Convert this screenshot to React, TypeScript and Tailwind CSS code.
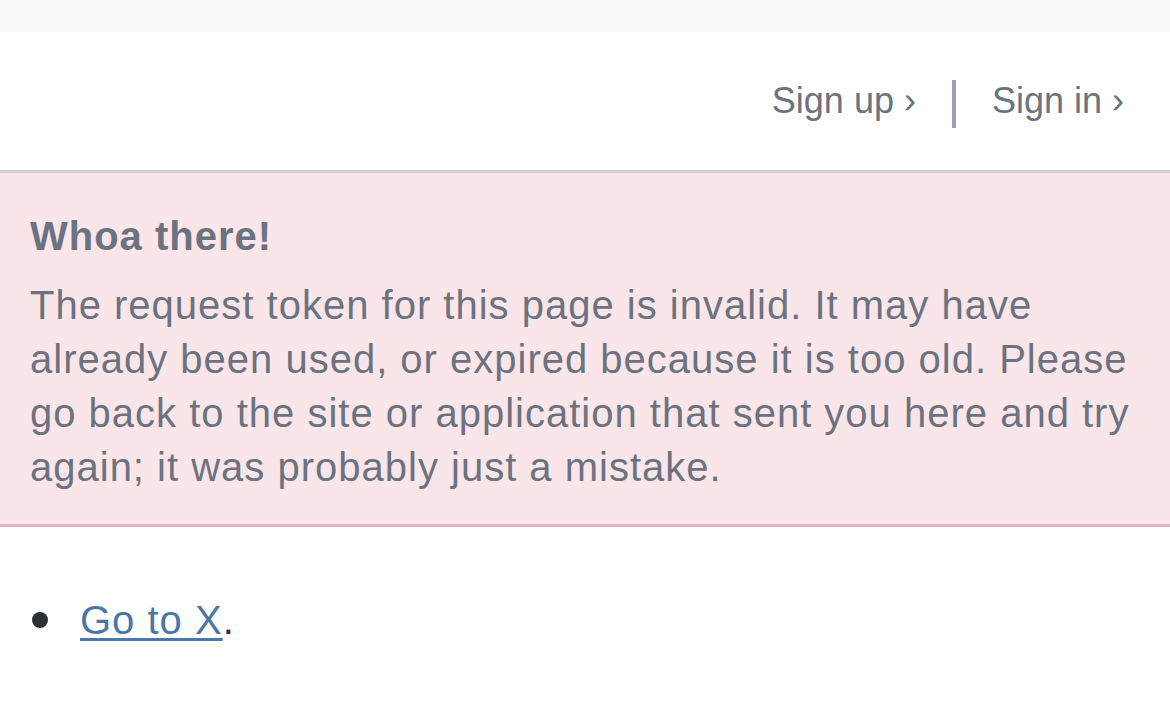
export default function App() {
  return (
    <div className="min-h-[703px] bg-white text-[#6b7280]" style={{ fontFamily: '"Liberation Sans", Arial, sans-serif' }}>
      <div className="h-[32px] bg-[#fafafa]" />
      <header className="flex h-[141px] items-center justify-end border-b-[3px] border-[#d3d3d6] pr-[46px] text-[36px] text-[#6b7280]">
        <a className="leading-none">Sign up ›</a>
        <span className="mx-[36px] mt-[6px] h-[48px] w-[4px] bg-[#9ba1b0]" />
        <a className="leading-none">Sign in ›</a>
      </header>
      <section className="border-b-[3px] border-[#e2b6c1] bg-[#fae6e9] px-[30px] pt-[36px] pb-[30px] text-[40px] leading-[54px] tracking-[1px]">
        <h1 className="mb-[15px] font-bold">Whoa there!</h1>
        <p>
          The request token for this page is invalid. It may have already been used, or expired because it is too old. Please go back to the site or application that sent you here and try again; it was probably just a mistake.
        </p>
      </section>
      <ul className="pl-[32px] pt-[66px] text-[40px] leading-[54px] tracking-[1px] text-[#2b3035]">
        <li className="flex items-center">
          <span className="mr-[32px] h-[16px] w-[16px] rounded-full bg-[#2b3035]" />
          <span>
            <a className="text-[#4a76a8] underline decoration-[3px] underline-offset-[4px]">Go to X</a>.
          </span>
        </li>
      </ul>
    </div>
  );
}
